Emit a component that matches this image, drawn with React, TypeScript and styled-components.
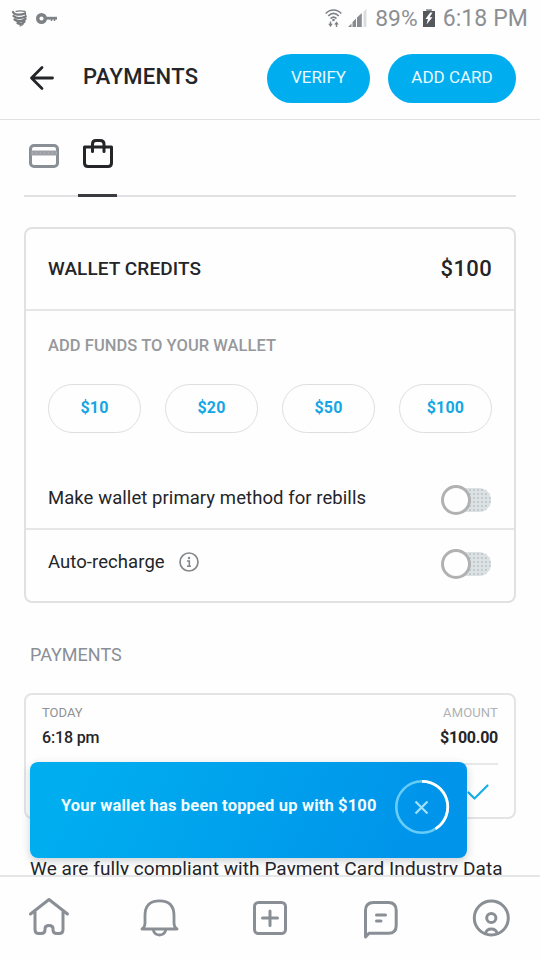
import React from 'react';
import styled, { createGlobalStyle } from 'styled-components';

const Global = createGlobalStyle`
  * { box-sizing: border-box; }
  body { margin: 0; background: #fefefe; font-family: Roboto, sans-serif; color: #242529; }
  button { font-family: inherit; margin: 0; padding: 0; border: 0; background: none; cursor: pointer; }
  svg { display: block; flex: none; }
`;

const line = '#dfe1e2';
const grey = '#8a8f96';
const blue = '#00aeef';

const Screen = styled.div`
  width: 540px;
  height: 960px;
  display: flex;
  flex-direction: column;
  overflow: hidden;
  position: relative;
  background: #fefefe;
`;

const Label = styled.span<{ $size: number; $weight?: number; $color?: string; $spacing?: number }>`
  font-size: ${p => p.$size}px;
  font-weight: ${p => p.$weight ?? 400};
  color: ${p => p.$color ?? '#242529'};
  letter-spacing: ${p => p.$spacing ?? 0}px;
  line-height: 1.2;
  white-space: nowrap;
`;

const StatusBar = styled.div`
  height: 38px;
  flex: none;
  display: flex;
  align-items: flex-start;
  justify-content: space-between;
  padding: 0 12px 0 11px;
`;

const StatusGroup = styled.div<{ $gap: number; $height: number }>`
  height: ${p => p.$height}px;
  display: flex;
  align-items: center;
  gap: ${p => p.$gap}px;
`;

const StatusText = styled(Label)`
  padding-top: 2px;
`;

const BatteryLevel = styled.div`
  display: flex;
  align-items: center;
  gap: 5px;
  margin: 0 2px 0 2px;
`;

const Header = styled.header`
  height: 82px;
  flex: none;
  display: flex;
  align-items: center;
  padding: 0 24px 0 29px;
  border-bottom: 1px solid ${line};
`;

const BackButton = styled.button`
  padding-bottom: 2px;
`;

const Title = styled.h1`
  margin: 0 auto 0 28px;
  font-size: 22px;
  font-weight: 500;
  line-height: 26px;
  letter-spacing: 0.35px;
  padding-bottom: 3px;
`;

const PillButton = styled.button<{ $width: number }>`
  width: ${p => p.$width}px;
  height: 49px;
  margin-left: 18px;
  padding-bottom: 3px;
  border-radius: 25px;
  background: ${blue};
  color: #e9f9ff;
  font-size: 17px;
`;

const Main = styled.main`
  flex: 1;
  min-height: 0;
  overflow: hidden;
  padding: 0 24px;
`;

const Tabs = styled.nav`
  height: 77px;
  display: flex;
  gap: 15px;
  border-bottom: 2px solid ${line};
`;

const Tab = styled.button<{ $active?: boolean }>`
  width: 39px;
  height: 77px;
  display: flex;
  justify-content: center;
  padding-top: 17px;
  border-bottom: 3px solid ${p => (p.$active ? '#3a3b3e' : 'transparent')};
`;

const WalletCard = styled.section`
  margin-top: 30px;
  height: 376px;
  border: 2px solid ${line};
  border-radius: 8px;
  display: flex;
  flex-direction: column;
`;

const Row = styled.div<{ $height: number; $bottom?: number; $divided?: boolean }>`
  height: ${p => p.$height}px;
  flex: none;
  display: flex;
  align-items: center;
  justify-content: space-between;
  padding: 0 22px ${p => p.$bottom ?? 0}px;
  border-bottom: ${p => (p.$divided ? '2px solid #e4e6e7' : '0')};
`;

const Funds = styled.div`
  height: 161px;
  padding: 25px 22px 0;
`;

const Amounts = styled.div`
  display: grid;
  grid-template-columns: repeat(4, 93px);
  gap: 24px;
  margin-top: 28px;
`;

const AmountButton = styled.button`
  height: 49px;
  padding-bottom: 2px;
  border: 1px solid #dcdfe0;
  border-radius: 25px;
  color: #15a6e4;
  font-size: 16px;
  font-weight: 700;
  letter-spacing: 0.2px;
`;

const Inline = styled.div`
  display: flex;
  align-items: center;
  gap: 13px;
  padding-bottom: 4px;
`;

const Switch = styled.button`
  width: 50px;
  height: 30px;
  display: flex;
  align-items: center;
  margin-right: 1px;
`;

const Knob = styled.span`
  width: 30px;
  height: 30px;
  flex: none;
  border: 3px solid #b0b1b2;
  border-radius: 50%;
  background: #fefefe;
  z-index: 1;
`;

const Track = styled.span`
  width: 35px;
  height: 24px;
  flex: none;
  margin-left: -15px;
  border-radius: 0 12px 12px 0;
  background: radial-gradient(circle, #c2c9cf 0.8px, transparent 1px) 0 0 / 4px 4px, #dce1e3;
`;

const SectionTitle = styled.h2`
  margin: 40px 0 0 6px;
  font-size: 18px;
  line-height: 24px;
  font-weight: 400;
  color: ${grey};
`;

const PaymentCard = styled.section`
  height: 126px;
  margin-top: 26px;
  border: 2px solid #e2e4e5;
  border-radius: 8px;
  padding: 8px 16px 0;
`;

const PaymentHead = styled.div`
  height: 62px;
  display: flex;
  justify-content: space-between;
  border-bottom: 2px solid #e6e8e9;
`;

const Stack = styled.div<{ $end?: boolean }>`
  display: flex;
  flex-direction: column;
  align-items: ${p => (p.$end ? 'flex-end' : 'flex-start')};
  gap: 7px;
  padding-top: 2px;
`;

const PaymentStatus = styled.div`
  display: flex;
  justify-content: flex-end;
  padding: 18px 8px 0 0;
`;

const Compliance = styled.p`
  margin: 37px 0 0 6px;
  font-size: 19px;
  line-height: 25px;
  letter-spacing: 0.08px;
  white-space: nowrap;
`;

const Toast = styled.div`
  position: absolute;
  left: 30px;
  top: 762px;
  width: 437px;
  height: 96px;
  display: flex;
  align-items: center;
  justify-content: space-between;
  padding: 0 17px 6px 31px;
  border-radius: 8px;
  background: linear-gradient(115deg, #00adef 12%, #0094ea 88%);
  box-shadow: 0 3px 9px rgba(30, 40, 50, 0.22);
`;

const ToastText = styled.span`
  color: #f2fcff;
  font-size: 16.5px;
  font-weight: 700;
  letter-spacing: 0.16px;
  white-space: nowrap;
  padding-bottom: 4px;
`;

const BottomNav = styled.nav`
  height: 85px;
  flex: none;
  display: flex;
  justify-content: space-between;
  padding: 20px 27px 0;
  border-top: 2px solid #e4e6e7;
  background: #fefefe;
`;

const strokeProps = { fill: 'none', strokeLinecap: 'round', strokeLinejoin: 'round' } as const;

const SwirlIcon = () => (
  <svg width="17" height="17" viewBox="0 0 17 17" {...strokeProps} stroke="#777b7f" strokeWidth="2.300">
    <path d="M2 2C3 5 9 5.500 14 3.500M2.500 6C5 8.500 10 8.500 14.500 6.500M3.500 9.500C7 12 11 11.500 14.500 9M6.500 13C9 14.500 12 13.500 13.500 11.500" />
    <path d="M5 1.300C8 .6 11 .8 14 1.300L15 7" strokeWidth="1.200" />
    <path d="M9 16L12 14.500" strokeWidth="1.200" />
  </svg>
);

const KeyIcon = () => (
  <svg width="22" height="13" viewBox="0 0 22 13" fill="none" stroke="#7d8286">
    <circle cx="5.500" cy="6.500" r="3.800" strokeWidth="3.400" />
    <path d="M10 6.200H21" strokeWidth="2.800" />
    <path d="M15.500 7V9M18.500 7V9" strokeWidth="1.500" />
  </svg>
);

const WifiIcon = () => (
  <svg width="17" height="19" viewBox="0 0 17 19" fill="none" stroke="#7d8084" strokeWidth="1.700">
    <path d="M.8 4.500C5-.2 12-.2 16.200 4.500M3.200 7C6.500 3.700 10.500 3.700 13.800 7M5.600 9.600C7.500 7.800 9.500 7.800 11.400 9.600" />
    <circle cx="8.500" cy="11" r="1.300" fill="#7d8084" stroke="none" />
    <path d="M5.500 12.500V15.500M11.500 18V14.500" strokeWidth="1.400" />
    <path d="M3.200 14.800H7.800L5.500 18ZM9.200 15.600H13.800L11.500 12.500Z" fill="#7d8084" stroke="none" />
  </svg>
);

const SignalIcon = () => (
  <svg width="19" height="18" viewBox="0 0 19 18" fill="#888b8f">
    <path d="M0 18L3.500 14.500V18ZM4.500 18V13L8 9.500V18ZM9 18V8.500L13.800 4V18Z" />
    <path d="M15.500 18V2.500L18.500 0V18Z" fill="#dcddde" />
  </svg>
);

const BatteryIcon = () => (
  <svg width="12" height="18" viewBox="0 0 12 18">
    <path d="M3.500 0H8.500V2H12V18H0V2H3.500Z" fill="#55585b" />
    <path d="M3 0H9V1.600H3Z" fill="#a4a7aa" />
    <path d="M7.200 3.500L2.500 10H5L3.500 15.500L9.500 8.200H6.600L9.500 3.500Z" fill="#fff" />
  </svg>
);

const BackIcon = () => (
  <svg width="26" height="26" viewBox="0 0 26 26" {...strokeProps} stroke="#242529" strokeWidth="2.800">
    <path d="M13 2.500L2.500 13L13 23.500M3 13H23.500" />
  </svg>
);

const CardIcon = () => (
  <svg width="32" height="34" viewBox="0 0 32 34" {...strokeProps} stroke={grey} strokeWidth="3">
    <rect x="2.500" y="8.500" width="27" height="21" rx="3.500" />
    <path d="M3 16H29" strokeWidth="5" stroke="#9da1a7" strokeLinecap="butt" />
    <path d="M4 16H29" strokeWidth="1" stroke="#b9bdc2" strokeDasharray="1 3" strokeLinecap="butt" />
  </svg>
);

const BagIcon = () => (
  <svg width="32" height="34" viewBox="0 0 32 34" {...strokeProps} stroke="#242529" strokeWidth="3">
    <path d="M2.500 10H29.500V26Q29.500 29.500 26 29.500H6Q2.500 29.500 2.500 26Z" />
    <path d="M10.500 14.500V7Q10.500 3.500 14 3.500H18Q22 3.500 22 7V14.500" />
  </svg>
);

const InfoIcon = () => (
  <svg width="22" height="22" viewBox="0 0 22 22" fill="none" stroke="#85888b">
    <circle cx="11" cy="11" r="9" strokeWidth="1.700" />
    <path d="M9 10H11.300V15M9 15.200H13" strokeWidth="1.600" />
    <circle cx="11" cy="7" r="1.200" fill="#85888b" stroke="none" />
  </svg>
);

const CheckIcon = () => (
  <svg width="24" height="18" viewBox="0 0 24 18" {...strokeProps} stroke="#17aee9" strokeWidth="2.200">
    <path d="M2.500 9.500L8.500 15.500L21.500 2.500" />
  </svg>
);

const CountdownClose = () => (
  <svg width="56" height="56" viewBox="0 0 56 56" fill="none">
    <circle cx="28" cy="28" r="25.700" stroke="#67cdf7" strokeWidth="2.600" />
    <path d="M28 2.300A25.700 25.700 0 0 1 41.500 49.900" stroke="#fff" strokeWidth="2.800" />
    <path d="M21.500 22.500L33.500 34.500M33.500 22.500L21.500 34.500" stroke="#9ce0fb" strokeWidth="2.300" />
  </svg>
);

const NavGlyph = ({ children }: { children: React.ReactNode }) => (
  <svg width="44" height="44" viewBox="0 0 44 44" {...strokeProps} stroke={grey} strokeWidth="3">
    {children}
  </svg>
);

const Toggle = () => (
  <Switch role="switch" aria-checked="false">
    <Knob />
    <Track />
  </Switch>
);

export default function App() {
  return (
    <>
      <Global />
      <Screen>
        <StatusBar>
          <StatusGroup $gap={8} $height={36}>
            <SwirlIcon />
            <KeyIcon />
          </StatusGroup>
          <StatusGroup $gap={6} $height={36}>
            <WifiIcon />
            <SignalIcon />
            <BatteryLevel>
              <StatusText $size={22.8} $color="#8c8f93">89%</StatusText>
              <BatteryIcon />
            </BatteryLevel>
            <StatusText $size={23} $color="#8c8f93" $spacing={0.1}>6:18 PM</StatusText>
          </StatusGroup>
        </StatusBar>
        <Header>
          <BackButton aria-label="Back"><BackIcon /></BackButton>
          <Title>PAYMENTS</Title>
          <PillButton $width={103}>VERIFY</PillButton>
          <PillButton $width={128}>ADD CARD</PillButton>
        </Header>
        <Main>
          <Tabs>
            <Tab aria-label="Cards"><CardIcon /></Tab>
            <Tab aria-label="Wallet" $active><BagIcon /></Tab>
          </Tabs>
          <WalletCard>
            <Row $height={82} $divided>
              <Label $size={19} $weight={500} $spacing={0.09}>WALLET CREDITS</Label>
              <Label $size={22} $weight={500} $spacing={0.35}>$100</Label>
            </Row>
            <Funds>
              <Label $size={16.5} $weight={500} $color="#96989b" $spacing={0.05}>ADD FUNDS TO YOUR WALLET</Label>
              <Amounts>
                {['$10', '$20', '$50', '$100'].map(a => <AmountButton key={a}>{a}</AmountButton>)}
              </Amounts>
            </Funds>
            <Row $height={58} $divided>
              <Inline>
                <Label $size={18.5} $spacing={0.07}>Make wallet primary method for rebills</Label>
              </Inline>
              <Toggle />
            </Row>
            <Row $height={70} $bottom={2}>
              <Inline>
                <Label $size={18.5} $spacing={0.07}>Auto-recharge</Label>
                <InfoIcon />
              </Inline>
              <Toggle />
            </Row>
          </WalletCard>
          <SectionTitle>PAYMENTS</SectionTitle>
          <PaymentCard>
            <PaymentHead>
              <Stack>
                <Label $size={13} $color="#8f9295">TODAY</Label>
                <Label $size={16} $weight={500} $spacing={-0.15}>6:18 pm</Label>
              </Stack>
              <Stack $end>
                <Label $size={13} $color="#b0b2b4" $spacing={0.15}>AMOUNT</Label>
                <Label $size={16} $weight={700} $spacing={-0.25}>$100.00</Label>
              </Stack>
            </PaymentHead>
            <PaymentStatus><CheckIcon /></PaymentStatus>
          </PaymentCard>
          <Compliance>We are fully compliant with Payment Card Industry Data</Compliance>
        </Main>
        <BottomNav>
          <NavGlyph>
            <path d="M3.500 17L22 2.500L40.500 17M8 15V32.500Q8 36.500 12 36.500H14Q18 36.500 18 33V31.500Q18 28.500 22 28.500Q26 28.500 26 31.500V33Q26 36.500 30 36.500H32Q36 36.500 36 32.500V15" />
          </NavGlyph>
          <NavGlyph>
            <path d="M4 32H39M4 32Q7 30.500 7 26V18.500Q7 3.800 21.500 3.800Q36 3.800 36 18.500V26Q36 30.500 39 32M15 32.500Q16.500 38 21.500 38Q26.500 38 28 32.500" strokeWidth="2.800" />
          </NavGlyph>
          <NavGlyph>
            <rect x="6.500" y="5.500" width="31" height="31" rx="4" />
            <path d="M22 14V28.500M14.500 21H29.500" />
          </NavGlyph>
          <NavGlyph>
            <path d="M6.500 40V13.500Q6.500 5.500 14.500 5.500H29.500Q37.200 5.500 37.200 13.500V28.500Q37.200 36.300 29.500 36.300H10Z" />
            <path d="M17.500 18H26.500M17.500 24H22" />
          </NavGlyph>
          <NavGlyph>
            <circle cx="22.300" cy="21" r="17" />
            <circle cx="22.300" cy="21" r="4.600" />
            <path d="M16.500 36.500Q17.500 32 22.300 32Q27.100 32 28.100 36.500" />
          </NavGlyph>
        </BottomNav>
        <Toast role="status">
          <ToastText>Your wallet has been topped up with $100</ToastText>
          <CountdownClose />
        </Toast>
      </Screen>
    </>
  );
}
